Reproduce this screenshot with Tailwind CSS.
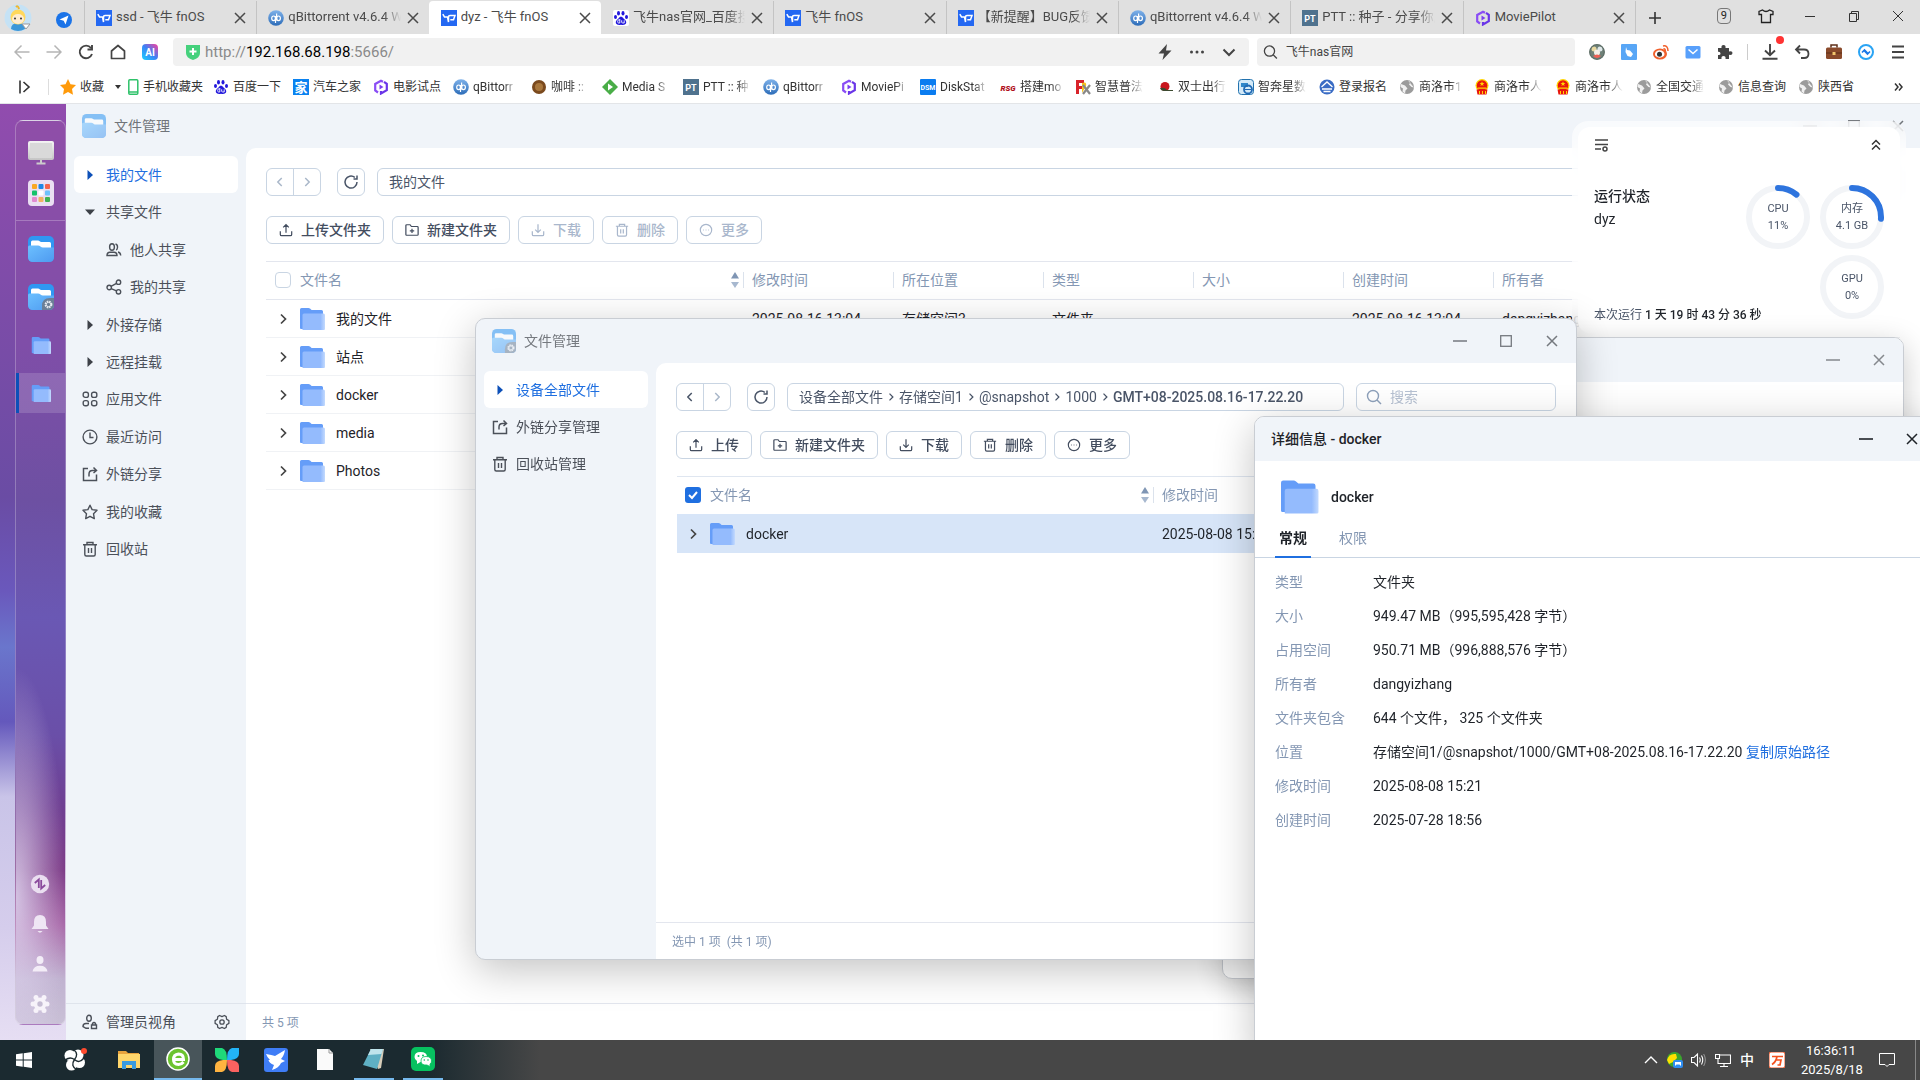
<!DOCTYPE html>
<html lang="zh-CN">
<head>
<meta charset="utf-8">
<meta name="viewport" content="width=device-width, initial-scale=1">
<title>dyz - 飞牛 fnOS</title>
<script src="https://cdn.jsdelivr.net/npm/@tailwindcss/browser@4"></script>
</head>
<body class="flex h-screen flex-col overflow-hidden bg-white font-['Roboto','Noto_Sans_CJK_SC',sans-serif] text-sm text-[#1f2329]">

<svg class="absolute size-0" aria-hidden="true">
  <defs>
    <linearGradient id="g-folder" x1="0" y1="0" x2="1" y2="0"><stop offset=".8" stop-color="#94bbfd"/><stop offset="1" stop-color="#c3dafe"/></linearGradient>
    <linearGradient id="g-app" x1="0" y1="0" x2="1" y2="1"><stop offset="0" stop-color="#6cc0ff"/><stop offset="1" stop-color="#4e9af0"/></linearGradient>
    <linearGradient id="g-mon" x1="0" y1="0" x2="0" y2="1"><stop offset="0" stop-color="#f4f4f4"/><stop offset="1" stop-color="#c4c4c4"/></linearGradient>
    <linearGradient id="g-ai" x1="0" y1="1" x2="1" y2="0"><stop offset="0" stop-color="#19d3ff"/><stop offset=".5" stop-color="#3b82f6"/><stop offset="1" stop-color="#ff3d9a"/></linearGradient>
    <linearGradient id="g-qb" x1="0" y1="0" x2="0" y2="1"><stop offset="0" stop-color="#7fb2ea"/><stop offset="1" stop-color="#2c6cb8"/></linearGradient>
  </defs>
  <symbol id="folder" viewBox="0 0 26 24"><path d="M1 2.500Q1 1 2.500 1H9.500Q10.300 1 11 1.600L12.600 3H22.500Q24 3 24 4.500V22H2Q1 22 1 21Z" fill="#659df8"/><path d="M3.500 8Q3.500 6.500 5 6.500H24.500Q26 6.500 26 8V22Q26 23 25 23H3.500Z" fill="url(#g-folder)"/></symbol>
  <symbol id="app" viewBox="0 0 26 26"><rect width="26" height="26" rx="5" fill="#2f97f2"/><path d="M3 6Q3 4.500 4.500 4.500H10Q11 4.500 12 5.500L13 6H21.500Q23 6 23 7.500V14H3Z" fill="#fff"/><path d="M0 11Q0 9.500 1.500 9.500H10Q11.500 9.500 12.500 10.500Q13.500 11.500 15 11.500H26V21Q26 26 21 26H5Q0 26 0 21Z" fill="url(#g-app)"/></symbol>
  <symbol id="app-gear" viewBox="0 0 26 26"><use href="#app"/><path d="M14 26V22Q14 14 22 14H26V21Q26 26 21 26Z" fill="#6b7f96"/><circle cx="20.500" cy="20.500" r="3" fill="none" stroke="#e4e9f0" stroke-width="1.800" stroke-dasharray="1.600 .8"/><circle cx="20.500" cy="20.500" r="2.200" fill="none" stroke="#e4e9f0"/></symbol>
  <symbol id="upload" viewBox="0 0 16 16"><path d="M8 11V2M4.800 5 8 1.800 11.200 5M1.500 9.500V13Q1.500 14.500 3 14.500H13Q14.500 14.500 14.500 13V9.500" fill="none" stroke="currentColor" stroke-width="1.400"/></symbol>
  <symbol id="download" viewBox="0 0 16 16"><path d="M8 1.500V10.500M4.800 7.500 8 10.700 11.200 7.500M1.500 9.500V13Q1.500 14.500 3 14.500H13Q14.500 14.500 14.500 13V9.500" fill="none" stroke="currentColor" stroke-width="1.400"/></symbol>
  <symbol id="newfolder" viewBox="0 0 16 16"><path d="M1 3Q1 2 2 2H5.800L7.300 4H14Q15 4 15 5V13Q15 14 14 14H2Q1 14 1 13ZM8 6.500V11.500M5.500 9H10.500" fill="none" stroke="currentColor" stroke-width="1.400"/></symbol>
  <symbol id="trash" viewBox="0 0 16 16"><path d="M1 3.700H15M5 3.500V1.500H11V3.500M2.800 4V13.500Q2.800 15 4.300 15H11.700Q13.200 15 13.200 13.500V4M6.500 7V12M9.500 7V12" fill="none" stroke="currentColor" stroke-width="1.400"/></symbol>
  <symbol id="more" viewBox="0 0 16 16"><circle cx="8" cy="8" r="6.500" fill="none" stroke="currentColor" stroke-width="1.300"/><path d="M4.500 8H5.500M7.500 8H8.500M10.500 8H11.500" stroke="currentColor" stroke-width="1"/></symbol>
  <symbol id="refresh" viewBox="0 0 16 16"><path d="M14 8A6 6 0 1 1 11.800 3.400M14 1.500V5H10.500" fill="none" stroke="currentColor" stroke-width="1.500"/></symbol>
  <symbol id="left" viewBox="0 0 16 16"><path d="M10 3.500 5.500 8 10 12.500" fill="none" stroke="currentColor" stroke-width="1.700"/></symbol>
  <symbol id="right" viewBox="0 0 16 16"><path d="M6 3.500 10.500 8 6 12.500" fill="none" stroke="currentColor" stroke-width="1.700"/></symbol>
  <symbol id="share" viewBox="0 0 16 16"><path d="M6 2.500H1.500V14.500H14.500V8.500M7 10.500V8Q7 4.500 10.500 4.500H14.500M11.500 1.500 14.500 4.500 11.500 7" fill="none" stroke="currentColor" stroke-width="1.500"/></symbol>
  <symbol id="clock" viewBox="0 0 16 16"><circle cx="8" cy="8" r="6.900" fill="none" stroke="currentColor" stroke-width="1.400"/><path d="M8 3.500V8.500H11.500" fill="none" stroke="currentColor" stroke-width="1.400"/></symbol>
  <symbol id="star" viewBox="0 0 16 16"><path d="M8 1.200 10.100 5.600 15 6.300 11.500 9.700 12.300 14.600 8 12.300 3.700 14.600 4.500 9.700 1 6.300 5.900 5.600Z" fill="none" stroke="currentColor" stroke-width="1.400" stroke-linejoin="round"/></symbol>
  <symbol id="grid4" viewBox="0 0 16 16"><g fill="none" stroke="currentColor" stroke-width="1.400"><rect x="1.200" y="1.200" width="5.200" height="5.200" rx="2"/><rect x="9.600" y="1.200" width="5.200" height="5.200" rx="2"/><rect x="1.200" y="9.600" width="5.200" height="5.200" rx="2"/><rect x="9.600" y="9.600" width="5.200" height="5.200" rx="2"/></g></symbol>
  <symbol id="people" viewBox="0 0 16 16"><g fill="none" stroke="currentColor" stroke-width="1.400"><ellipse cx="6" cy="5" rx="2.400" ry="3.200"/><path d="M1 13.500Q1 10.200 4 10.200H8Q11 10.200 11 13.500ZM9.500 2Q11.700 2.500 11.500 5.500 11.300 7.500 10.200 8M12 10Q14.500 10.500 14.700 13.500"/></g></symbol>
  <symbol id="nodes" viewBox="0 0 16 16"><g fill="none" stroke="currentColor" stroke-width="1.400"><circle cx="3.200" cy="8.500" r="2.200"/><circle cx="12.500" cy="3.200" r="2.200"/><circle cx="12.500" cy="12.800" r="2.200"/><path d="M5 7.300 10.500 4.300M5.200 9.600 10.500 11.800"/></g></symbol>
  <symbol id="gear" viewBox="0 0 16 16"><path d="M5.600 1.500 8 2.600 10.400 1.500 12.200 2.600 12.600 5.200 14.900 6.600V9.400L12.600 10.800 12.200 13.400 10.400 14.500 8 13.400 5.600 14.500 3.800 13.400 3.400 10.800 1.100 9.400V6.600L3.400 5.200 3.800 2.600Z" fill="none" stroke="currentColor" stroke-width="1.300" stroke-linejoin="round"/><circle cx="8" cy="8" r="2.200" fill="none" stroke="currentColor" stroke-width="1.300"/></symbol>
  <symbol id="admin" viewBox="0 0 16 16"><g fill="none" stroke="currentColor" stroke-width="1.400"><ellipse cx="7" cy="4.300" rx="2.300" ry="3"/><path d="M7 9.500H4Q1 9.500 1 12.500L4 14.300H7M9.500 11H14.500V14.500H9.500ZM10.500 11V9.500Q12 7.500 13.500 9.500V11"/></g></symbol>
  <symbol id="mag" viewBox="0 0 16 16"><circle cx="7" cy="7" r="5.500" fill="none" stroke="currentColor" stroke-width="1.400"/><path d="M11 11 15 15" stroke="currentColor" stroke-width="1.400"/></symbol>
  <symbol id="x" viewBox="0 0 16 16"><path d="M3 3 13 13M13 3 3 13" stroke="currentColor" stroke-width="1.500"/></symbol>
  <symbol id="min" viewBox="0 0 16 16"><path d="M1 8H15" stroke="currentColor" stroke-width="1.600"/></symbol>
  <symbol id="max" viewBox="0 0 16 16"><rect x="2.700" y="2.700" width="10.600" height="10.600" fill="none" stroke="currentColor" stroke-width="1.300"/></symbol>
  <symbol id="sort" viewBox="0 0 8 16"><path d="M4 0 8 6.500H0Z" fill="#7f95b4"/><path d="M4 16 8 10H0Z" fill="#a7b8cf"/></symbol>
  <symbol id="fn" viewBox="0 0 16 16"><rect width="16" height="16" fill="#2468f2"/><path d="M1.800 4.200 3.500 7H6.500L7.500 12V6.700Q7.500 5.500 9 5.500H14L12.500 9.800H9.300" fill="none" stroke="#fff" stroke-width="1.500"/></symbol>
  <symbol id="qb" viewBox="0 0 16 16"><circle cx="8" cy="8" r="7.800" fill="url(#g-qb)"/><g fill="none" stroke="#fff" stroke-width="1.200"><ellipse cx="5.600" cy="8.300" rx="1.900" ry="2.300"/><ellipse cx="10.500" cy="8.300" rx="1.900" ry="2.300"/><path d="M7.500 6V13M8.600 3.500V10.500"/></g></symbol>
  <symbol id="baidu" viewBox="0 0 16 16"><rect width="16" height="16" rx="2" fill="#fff"/><g fill="#2319dc"><ellipse cx="5.500" cy="3.300" rx="1.500" ry="2.200"/><ellipse cx="10" cy="3.300" rx="1.500" ry="2.200"/><ellipse cx="2.500" cy="7" rx="1.500" ry="2"/><ellipse cx="13.500" cy="7" rx="1.500" ry="2"/><path d="M8 6.500Q10 7 11 9 14 11 13 13.500 12 15.500 8 14.800 4 15.500 3 13.500 2 11 5 9 6.500 6.500 8 6.500Z"/></g><path d="M6.800 10H5.500Q4.700 10 4.700 11.500 4.700 13 5.500 13H6.800V9M8.700 10.300V12.500Q9 13 11.200 13V10.300" fill="none" stroke="#fff" stroke-width=".9"/></symbol>
  <symbol id="mp" viewBox="0 0 16 16"><g fill="none" stroke="#8a4df5" stroke-width="2.200"><path d="M5 13.500 2.200 11.500V5L8 1.800 10 2.800"/><path d="M11 2.800 13.800 4.800V11.200L8 14.500V12" stroke="#6a35e8"/></g><path d="M6.500 5.500 10.500 8 6.500 10.500Z" fill="#7b3ff0"/></symbol>
  <symbol id="pt" viewBox="0 0 16 16"><rect width="16" height="16" fill="#4f728e"/><text x="8" y="12" font-size="9" font-weight="700" text-anchor="middle" fill="#fff">PT</text></symbol>
  <symbol id="globe" viewBox="0 0 16 16"><circle cx="8" cy="8" r="7" fill="#9b9b9b"/><path d="M9 1.500 11.500 3 10 5.500 12.500 8 15 8.500 12 5M2 5 6 6.500 8.500 9.500 6.500 11.500 6 14.500 3.500 12.500 4 9.500 1.500 8Z" fill="#fff" opacity=".85"/></symbol>
  <symbol id="emblem" viewBox="0 0 16 16"><circle cx="8" cy="6.500" r="6.500" fill="#ffd400"/><circle cx="8" cy="6.500" r="5.200" fill="#e8160c"/><path d="M2.500 10.500H13.500L12.500 15.500H3.500Z" fill="#e8160c"/><path d="M8 2.200 8.700 4 10.500 4 9 5.200 9.600 7 8 6 6.400 7 7 5.200 5.500 4H7.300ZM4 8.500H12V9.800H4ZM5 12H6V15H5ZM8 12H9V15H8ZM11 12H12V15H11Z" fill="#ffd400"/></symbol>
</svg>

<!-- tab strip -->
<header class="shrink-0">
  <div class="flex h-[34px] items-stretch bg-[#e0e0e0] pt-px text-[13px] text-[#4a4a4a]">
    <div class="flex w-[84px] shrink-0 items-center gap-5 pl-1">
      <svg viewBox="0 0 28 28" class="size-7"><circle cx="14" cy="14" r="13.500" fill="#c5e2f5"/><path d="M7 25Q7 19 14 19T21 25Q14 29 7 25Z" fill="#3c97d8"/><circle cx="14" cy="13" r="7.500" fill="#ffd85c"/><ellipse cx="14" cy="15" rx="6" ry="5" fill="#ffecd0"/><path d="M12 3Q14 1 15 5" stroke="#f0b52c" stroke-width="2" fill="none"/><circle cx="11" cy="14.500" r="1" fill="#333"/><circle cx="17" cy="14.500" r="1" fill="#333"/><path d="M18 20H26L22 25Z" fill="#fff" stroke="#999"/></svg>
      <svg viewBox="0 0 16 16" class="ml-1 mt-1 size-4"><circle cx="8" cy="8" r="8" fill="#1a73e8"/><path d="M12.500 3.500 9.500 12.500 7.700 8.700 3.500 7.500Z" fill="#fff"/></svg>
    </div>
    <a href="#" class="flex min-w-0 flex-1 items-center gap-1 pl-3 pr-2 shadow-[inset_1px_0_0_#c4c4c4]"><svg class="size-4 shrink-0"><use href="#fn"/></svg><span class="flex-1 overflow-hidden whitespace-nowrap">ssd - 飞牛 fnOS</span><svg class="size-4 shrink-0"><use href="#x"/></svg></a>
    <a href="#" class="flex min-w-0 flex-1 items-center gap-1 pl-3 pr-2 shadow-[inset_1px_0_0_#c4c4c4]"><svg class="size-4 shrink-0"><use href="#qb"/></svg><span class="flex-1 overflow-hidden whitespace-nowrap [mask-image:linear-gradient(to_right,#000_85%,transparent)]">qBittorrent v4.6.4 W</span><svg class="size-4 shrink-0"><use href="#x"/></svg></a>
    <a href="#" aria-current="page" class="flex min-w-0 flex-1 items-center gap-1 rounded-t bg-white pl-3 pr-2"><svg class="size-4 shrink-0"><use href="#fn"/></svg><span class="flex-1 overflow-hidden whitespace-nowrap">dyz - 飞牛 fnOS</span><svg class="size-4 shrink-0"><use href="#x"/></svg></a>
    <a href="#" class="flex min-w-0 flex-1 items-center gap-1 pl-3 pr-2"><svg class="size-4 shrink-0"><use href="#baidu"/></svg><span class="flex-1 overflow-hidden whitespace-nowrap [mask-image:linear-gradient(to_right,#000_85%,transparent)]">飞牛nas官网_百度搜</span><svg class="size-4 shrink-0"><use href="#x"/></svg></a>
    <a href="#" class="flex min-w-0 flex-1 items-center gap-1 pl-3 pr-2 shadow-[inset_1px_0_0_#c4c4c4]"><svg class="size-4 shrink-0"><use href="#fn"/></svg><span class="flex-1 overflow-hidden whitespace-nowrap">飞牛 fnOS</span><svg class="size-4 shrink-0"><use href="#x"/></svg></a>
    <a href="#" class="flex min-w-0 flex-1 items-center gap-1 pl-3 pr-2 shadow-[inset_1px_0_0_#c4c4c4]"><svg class="size-4 shrink-0"><use href="#fn"/></svg><span class="flex-1 overflow-hidden whitespace-nowrap [mask-image:linear-gradient(to_right,#000_85%,transparent)]">【新提醒】BUG反馈</span><svg class="size-4 shrink-0"><use href="#x"/></svg></a>
    <a href="#" class="flex min-w-0 flex-1 items-center gap-1 pl-3 pr-2 shadow-[inset_1px_0_0_#c4c4c4]"><svg class="size-4 shrink-0"><use href="#qb"/></svg><span class="flex-1 overflow-hidden whitespace-nowrap [mask-image:linear-gradient(to_right,#000_85%,transparent)]">qBittorrent v4.6.4 W</span><svg class="size-4 shrink-0"><use href="#x"/></svg></a>
    <a href="#" class="flex min-w-0 flex-1 items-center gap-1 pl-3 pr-2 shadow-[inset_1px_0_0_#c4c4c4]"><svg class="size-4 shrink-0"><use href="#pt"/></svg><span class="flex-1 overflow-hidden whitespace-nowrap [mask-image:linear-gradient(to_right,#000_85%,transparent)]">PTT :: 种子 - 分享你所</span><svg class="size-4 shrink-0"><use href="#x"/></svg></a>
    <a href="#" class="flex min-w-0 flex-1 items-center gap-1 pl-3 pr-2 shadow-[inset_1px_0_0_#c4c4c4]"><svg class="size-4 shrink-0"><use href="#mp"/></svg><span class="flex-1 overflow-hidden whitespace-nowrap">MoviePilot</span><svg class="size-4 shrink-0"><use href="#x"/></svg></a>
    <div class="flex w-[285px] shrink-0 items-center pl-3 text-[#222] shadow-[inset_1px_0_0_#c4c4c4]">
      <button aria-label="新标签页"><svg viewBox="0 0 16 16" class="size-4"><path d="M8 2V14M2 8H14" stroke="#333" stroke-width="1.600"/></svg></button>
      <div class="ml-auto flex items-center pb-1 pr-3.5">
        <button class="mr-[27px] h-4 w-[14px] rounded-sm border border-[#777] text-[11px] leading-[14px]">9</button>
        <button aria-label="皮肤" class="mr-7"><svg viewBox="0 0 16 16" class="size-4"><path d="M4.500 2Q8 5 11.500 2L15 3.500V6.500H12.500V14.500H3.500V6.500H1V3.500Z" fill="none" stroke="#222" stroke-width="1.300"/></svg></button>
        <button aria-label="最小化" class="mr-7"><svg viewBox="0 0 16 16" class="size-4"><path d="M3 8.500H13" stroke="#333"/></svg></button>
        <button aria-label="还原" class="mr-7"><svg viewBox="0 0 16 16" class="size-4"><path d="M3.500 5.500H10.500V13.500H3.500ZM5.500 5.500V3.500H12.500V11.500H10.500" fill="none" stroke="#333"/></svg></button>
        <button aria-label="关闭"><svg viewBox="0 0 16 16" class="size-4"><path d="M3 3 13 13M13 3 3 13" stroke="#333"/></svg></button>
      </div>
    </div>
  </div>

  <!-- address row -->
  <div class="flex h-9 items-center">
    <div class="flex w-[173px] shrink-0 items-center gap-4 pl-[14px] text-[#444]">
      <button aria-label="后退"><svg viewBox="0 0 16 16" class="size-4"><path d="M15.500 8H1.500M7.500 1.500 1 8 7.500 14.500" fill="none" stroke="#b5b5b5" stroke-width="1.500"/></svg></button>
      <button aria-label="前进"><svg viewBox="0 0 16 16" class="size-4"><path d="M.5 8H14.500M8.500 1.500 15 8 8.500 14.500" fill="none" stroke="#b5b5b5" stroke-width="1.500"/></svg></button>
      <button aria-label="刷新"><svg viewBox="0 0 16 16" class="size-4"><path d="M14 10A6.300 6.300 0 1 1 13 4M14 1V5.500H9.500" fill="none" stroke="#444" stroke-width="1.900"/></svg></button>
      <button aria-label="主页"><svg viewBox="0 0 16 16" class="size-4"><path d="M1.500 14.500V7L8 1.500 14.500 7V14.500Z" fill="none" stroke="#444" stroke-width="1.700" stroke-linejoin="round"/></svg></button>
      <button aria-label="AI"><svg viewBox="0 0 16 16" class="size-4"><rect width="16" height="16" rx="4" fill="url(#g-ai)"/><text x="8" y="12" font-size="10" font-weight="700" text-anchor="middle" fill="#fff">AI</text></svg></button>
    </div>
    <div class="flex h-[34px] min-w-0 flex-1 items-center gap-4">
      <div class="flex h-7 min-w-0 flex-1 items-center gap-4 rounded bg-[#f1f1f1] px-3">
        <svg viewBox="0 0 16 16" class="-mr-3 size-4"><path d="M1 1H15V9Q15 14 8 16 1 14 1 9Z" fill="#45d17c"/><path d="M8 4V11M4.500 7.500H11.500" stroke="#fff" stroke-width="2"/></svg>
        <div role="textbox" aria-label="地址栏" class="flex-1 pt-px text-[15px] text-[#8a8a8a]">http://<span class="text-black">192.168.68.198</span>:5666/</div>
        <svg viewBox="0 0 16 16" class="size-4"><path d="M10 0 1.500 9.500H7L5.500 16 14.500 6.500H9Z" fill="#444"/></svg>
        <svg viewBox="0 0 16 16" class="size-4"><g fill="#444"><circle cx="2.500" cy="8" r="1.500"/><circle cx="8" cy="8" r="1.500"/><circle cx="13.500" cy="8" r="1.500"/></g></svg>
        <svg viewBox="0 0 16 16" class="size-4"><path d="M2.500 5.500 8 11 13.500 5.500" fill="none" stroke="#444" stroke-width="2"/></svg>
      </div>
    </div>
    <label class="ml-2 flex h-7 w-[318px] shrink-0 items-center gap-2 rounded bg-[#f1f1f1] pl-1.5">
      <svg class="size-4 text-[#444]"><use href="#mag"/></svg>
      <input aria-label="搜索" value="飞牛nas官网" class="w-full bg-transparent text-xs text-[#444] outline-none">
    </label>
    <div class="flex w-[345px] shrink-0 items-center gap-4 pl-[14px]">
      <svg viewBox="0 0 16 16" class="size-4"><circle cx="8" cy="8" r="7.500" fill="#6f8178"/><circle cx="5" cy="5" r="2.500" fill="#e8d9a0"/><circle cx="11" cy="5" r="2.500" fill="#dfe8ea"/><circle cx="8" cy="8.500" r="3" fill="#f4efe8"/><path d="M4 12Q8 9 12 12 8 16 4 12Z" fill="#ee5f55"/><circle cx="8" cy="8" r="7.300" fill="none" stroke="#5f6f68" stroke-width="1.300"/></svg>
      <svg viewBox="0 0 16 16" class="size-4"><rect width="16" height="16" rx="1" fill="#58a6f6"/><path d="M5 3 6 6 9 6.500 12 10 10 13 6.500 12 4.500 8Z" fill="#fff"/></svg>
      <svg viewBox="0 0 16 16" class="size-4"><ellipse cx="7" cy="10" rx="7" ry="5.500" fill="#f1602c"/><ellipse cx="6.700" cy="10" rx="4.800" ry="3.700" fill="#fff"/><circle cx="6.500" cy="10.200" r="2.500" fill="#333"/><path d="M10 2Q15 1 15 7M10.500 4.800Q12.500 4.500 12.300 7" stroke="#f1602c" stroke-width="1.500" fill="none"/></svg>
      <svg viewBox="0 0 16 16" class="size-4"><rect x=".5" y="2" width="15" height="12.500" rx="1.500" fill="#58a0fb"/><path d="M3.500 5.500 8 9.500 12.500 5.500" fill="none" stroke="#fff" stroke-width="1.500"/></svg>
      <svg viewBox="0 0 16 16" class="size-4"><path d="M1 4H4.500Q4 1 6.500 1T8.500 4H12V7.500Q15.500 6.500 15.500 9T12 10.800V15H8.500Q9 12 6.500 12T4.500 15H1V11Q3.500 11.500 3.500 9.500T1 7.800Z" fill="#444"/></svg>
      <span class="-mx-0.5 h-4 w-px bg-[#ccc]"></span>
      <span class="relative"><svg viewBox="0 0 16 16" class="size-4"><path d="M8 0V11M3 6.500 8 11.300 13 6.500M.5 14.800H15.500" fill="none" stroke="#444" stroke-width="1.900"/></svg><i class="absolute -right-1.5 -top-2 size-2 rounded-full bg-[#f33]"></i></span>
      <svg viewBox="0 0 16 16" class="size-4"><path d="M6 1.500 2 5.500 6 9.500M2 5.500H10Q14.500 5.500 14.500 9.800T10 14H7" fill="none" stroke="#444" stroke-width="1.800"/></svg>
      <svg viewBox="0 0 16 16" class="size-4"><rect y="3.500" width="16" height="11.500" rx="1.500" fill="#8a4a2b"/><path d="M5 3.500V1H11V3.500" fill="none" stroke="#5d2f18" stroke-width="1.500"/><path d="M0 9H16" stroke="#5d2f18"/><rect x="6.500" y="8" width="3" height="3" fill="#f3c56d"/></svg>
      <svg viewBox="0 0 16 16" class="size-4"><circle cx="8" cy="8" r="7" fill="none" stroke="#2aa4f4" stroke-width="2"/><path d="M4 8.500 6.500 6 9.500 9M12 7.500 9.500 10 6.500 7" fill="none" stroke="#1a78e8" stroke-width="1.600"/></svg>
      <button aria-label="菜单"><svg viewBox="0 0 16 16" class="size-4"><path d="M2 2.500H14M2 8H14M2 13.500H14" stroke="#444" stroke-width="1.800"/></svg></button>
    </div>
  </div>

  <!-- bookmarks -->
  <nav class="flex h-[34px] items-center overflow-hidden border-b border-[#e3e5e8] text-xs whitespace-nowrap text-[#333]">
    <div class="flex w-[127px] shrink-0 items-center pl-4">
      <svg viewBox="0 0 16 16" class="size-4"><path d="M4 1.500V14.500M7.500 3 13 8 7.500 13" fill="none" stroke="#333" stroke-width="1.600"/></svg>
      <span class="ml-4 h-4 w-px bg-[#ddd]"></span>
      <svg viewBox="0 0 16 16" class="ml-[11px] size-4"><path d="M8 0 10.500 5.200 16 6 12 10 13 15.800 8 13 3 15.800 4 10 0 6 5.500 5.200Z" fill="#ff9a0a"/></svg>
      <span class="ml-1 flex-1">收藏</span><svg viewBox="0 0 8 8" class="mr-[5px] size-2"><path d="M1 2H7L4 6Z" fill="#333"/></svg>
    </div>
    <a href="#" class="flex w-[86px] shrink-0 items-center gap-1"><svg viewBox="0 0 12 16" class="h-4 w-3"><rect x="1.800" y=".8" width="9" height="14.400" rx="1" fill="#fff" stroke="#2fc26a" stroke-width="1.500"/><path d="M2 13H11" stroke="#2fc26a" stroke-width="1.500"/></svg>手机收藏夹</a>
    <a href="#" class="flex w-20 shrink-0 items-center gap-1"><svg class="size-4 shrink-0"><use href="#baidu"/></svg>百度一下</a>
    <a href="#" class="flex w-20 shrink-0 items-center gap-1"><svg viewBox="0 0 16 16" class="size-4 shrink-0"><rect width="16" height="16" fill="#0a82f0"/><text x="8" y="13" font-size="13" font-weight="700" text-anchor="middle" fill="#fff">家</text></svg>汽车之家</a>
    <a href="#" class="flex w-20 shrink-0 items-center gap-1"><svg class="size-4 shrink-0"><use href="#mp"/></svg>电影试点</a>
    <a href="#" class="flex w-[78px] shrink-0 items-center gap-1"><svg class="size-4 shrink-0"><use href="#qb"/></svg><span class="w-11 overflow-hidden [mask-image:linear-gradient(to_right,#000_70%,transparent)]">qBittorr</span></a>
    <a href="#" class="flex w-[71px] shrink-0 items-center gap-1"><svg viewBox="0 0 16 16" class="size-4 shrink-0"><circle cx="8" cy="8" r="7" fill="#7b4a1e"/><circle cx="8" cy="8" r="4" fill="#a9773c"/></svg><span class="w-9 overflow-hidden [mask-image:linear-gradient(to_right,#000_70%,transparent)]">咖啡 ::</span></a>
    <a href="#" class="flex w-[81px] shrink-0 items-center gap-1"><svg viewBox="0 0 16 16" class="size-4 shrink-0"><path d="M8 0 16 8 8 16 0 8Z" fill="#49ad47"/><path d="M6 4.500 11 8 6 11.500Z" fill="#fff"/></svg><span class="w-12 overflow-hidden [mask-image:linear-gradient(to_right,#000_70%,transparent)]">Media S</span></a>
    <a href="#" class="flex w-20 shrink-0 items-center gap-1"><svg class="size-4 shrink-0"><use href="#pt"/></svg><span class="w-12 overflow-hidden [mask-image:linear-gradient(to_right,#000_70%,transparent)]">PTT :: 种</span></a>
    <a href="#" class="flex w-[78px] shrink-0 items-center gap-1"><svg class="size-4 shrink-0"><use href="#qb"/></svg><span class="w-11 overflow-hidden [mask-image:linear-gradient(to_right,#000_70%,transparent)]">qBittorr</span></a>
    <a href="#" class="flex w-[79px] shrink-0 items-center gap-1"><svg class="size-4 shrink-0"><use href="#mp"/></svg><span class="w-12 overflow-hidden [mask-image:linear-gradient(to_right,#000_70%,transparent)]">MoviePi</span></a>
    <a href="#" class="flex w-20 shrink-0 items-center gap-1"><svg viewBox="0 0 16 16" class="size-4 shrink-0"><rect width="16" height="16" rx="1" fill="#0a7cf0"/><text x="8" y="11" font-size="7" font-weight="700" text-anchor="middle" fill="#fff">DSM</text></svg><span class="w-12 overflow-hidden [mask-image:linear-gradient(to_right,#000_70%,transparent)]">DiskStat</span></a>
    <a href="#" class="flex w-[75px] shrink-0 items-center gap-1"><svg viewBox="0 0 16 16" class="size-4 shrink-0"><text x="8" y="11.500" font-size="8" font-weight="900" font-style="italic" text-anchor="middle" fill="#b01020">RSG</text></svg><span class="w-11 overflow-hidden [mask-image:linear-gradient(to_right,#000_70%,transparent)]">搭建mo</span></a>
    <a href="#" class="flex w-[83px] shrink-0 items-center gap-1"><svg viewBox="0 0 16 16" class="size-4 shrink-0"><path d="M1 15V1H9V4H4V7H8V10H4V15Z" fill="#d8232a"/><path d="M7 4Q12 2 11 7L7 14Z" fill="#f6c21c"/><path d="M8 6 15 15M15 6 8 15" stroke="#888" stroke-width="2.200"/></svg><span class="w-12 overflow-hidden [mask-image:linear-gradient(to_right,#000_70%,transparent)]">智慧普法</span></a>
    <a href="#" class="flex w-20 shrink-0 items-center gap-1"><svg viewBox="0 0 16 16" class="size-4 shrink-0"><circle cx="7" cy="7.500" r="4.500" fill="#c8161d"/><path d="M2 9Q7 8 9 11H15V12H6Q3 12 2 9Z" fill="#3c4a30"/></svg><span class="w-12 overflow-hidden [mask-image:linear-gradient(to_right,#000_70%,transparent)]">双士出行</span></a>
    <a href="#" class="flex w-[81px] shrink-0 items-center gap-1"><svg viewBox="0 0 16 16" class="size-4 shrink-0"><rect x=".5" y=".5" width="15" height="15" rx="3" fill="#d3e9f8" stroke="#2272ae"/><path d="M3 4H10V8H3Z" fill="#2f86c9"/><circle cx="10" cy="10.500" r="4" fill="none" stroke="#2069b4" stroke-width="1.800"/><path d="M7 10.500H13" stroke="#2069b4"/></svg><span class="w-12 overflow-hidden [mask-image:linear-gradient(to_right,#000_70%,transparent)]">智奔星数</span></a>
    <a href="#" class="flex w-20 shrink-0 items-center gap-1"><svg viewBox="0 0 16 16" class="size-4 shrink-0"><circle cx="8" cy="8" r="7.500" fill="#3a6cc4"/><path d="M2.500 8 8 3 13.500 8M3 10H13M4.500 12.500H11.500" stroke="#fff" stroke-width="1.300" fill="none"/></svg>登录报名</a>
    <a href="#" class="flex w-[75px] shrink-0 items-center gap-1"><svg class="size-4 shrink-0"><use href="#globe"/></svg><span class="w-11 overflow-hidden [mask-image:linear-gradient(to_right,#000_70%,transparent)]">商洛市1</span></a>
    <a href="#" class="flex w-[81px] shrink-0 items-center gap-1"><svg class="size-4 shrink-0"><use href="#emblem"/></svg><span class="w-12 overflow-hidden [mask-image:linear-gradient(to_right,#000_70%,transparent)]">商洛市人</span></a>
    <a href="#" class="flex w-[81px] shrink-0 items-center gap-1"><svg class="size-4 shrink-0"><use href="#emblem"/></svg><span class="w-12 overflow-hidden [mask-image:linear-gradient(to_right,#000_70%,transparent)]">商洛市人</span></a>
    <a href="#" class="flex w-[82px] shrink-0 items-center gap-1"><svg class="size-4 shrink-0"><use href="#globe"/></svg><span class="w-12 overflow-hidden [mask-image:linear-gradient(to_right,#000_70%,transparent)]">全国交通</span></a>
    <a href="#" class="flex w-20 shrink-0 items-center gap-1"><svg class="size-4 shrink-0"><use href="#globe"/></svg>信息查询</a>
    <a href="#" class="flex shrink-0 items-center gap-1"><svg class="size-4 shrink-0"><use href="#globe"/></svg>陕西省</a>
    <button aria-label="更多书签" class="ml-auto mr-3.5"><svg viewBox="0 0 16 16" class="size-4"><path d="M5 4.500 8 8 5 11.500M9 4.500 12 8 9 11.500" fill="none" stroke="#333" stroke-width="1.500"/></svg></button>
  </nav>
</header>

<!-- desktop -->
<main class="relative flex min-h-0 flex-1 overflow-hidden bg-[linear-gradient(180deg,#914cae_0%,#7c4ca8_22%,#6a4ca4_42%,#6a58bc_52%,#6a76cc_58%,#6458bc_66%,#c9c4e8_74%,#d5cdec_88%,#e6def3_100%)]">
  <nav aria-label="程序坞" class="mb-[15px] ml-[15px] mt-4 flex w-[51px] shrink-0 flex-col items-center rounded-lg border border-white/25 bg-[radial-gradient(ellipse_50px_230px_at_0%_86%,rgba(222,212,238,0.85),transparent),linear-gradient(180deg,#8f4ea8_0%,#7f4ea8_25%,#6d50a2_42%,#6a58b4_55%,#6a4fa8_68%,#6f3f92_76%,#7c3a86_83%,#a868a8_89%,#c0b2d0_95%,#c9c0d6_100%)]">
    <button aria-label="桌面" class="mt-3 flex h-10 items-center"><svg viewBox="0 0 26 26" class="size-[26px]"><rect y="1" width="26" height="19" rx="2" fill="url(#g-mon)"/><rect x="2" y="3" width="22" height="15" fill="#d9d9d9"/><path d="M12 20H14V22.500H17.500V24.500H8.500V22.500H12Z" fill="#ccc"/></svg></button>
    <button aria-label="应用" class="flex h-10 items-center"><svg viewBox="0 0 26 26" class="size-[26px]"><rect width="26" height="26" rx="4" fill="#eadff2"/><g><rect x="4" y="4" width="5" height="5" rx="1" fill="#f9a825"/><rect x="10.500" y="4" width="5" height="5" rx="1" fill="#1e88e5"/><rect x="17" y="4" width="5" height="5" rx="1" fill="#f4644d"/><rect x="4" y="10.500" width="5" height="5" rx="1" fill="#12c26b"/><rect x="10.500" y="10.500" width="5" height="5" rx="1" fill="#fff"/><rect x="17" y="10.500" width="5" height="5" rx="1" fill="#6fc2fb"/><rect x="4" y="17" width="5" height="5" rx="1" fill="#e08ad0"/><rect x="10.500" y="17" width="5" height="5" rx="1" fill="#f2b263"/><rect x="17" y="17" width="5" height="5" rx="1" fill="#3fb250"/></g></svg></button>
    <div class="mb-1 mt-[7px] h-px w-full bg-white/25"></div>
    <button aria-label="文件管理" class="flex h-12 items-center"><svg class="size-[26px]"><use href="#app"/></svg></button>
    <button aria-label="设备文件管理" class="flex h-12 items-center"><svg class="size-[26px]"><use href="#app-gear"/></svg></button>
    <button aria-label="文件夹" class="flex h-12 items-center"><svg class="h-[19px] w-5"><use href="#folder"/></svg></button>
    <button aria-label="当前文件夹" class="my-1 flex h-10 w-full items-center justify-center border-l-3 border-[#0d50b8] bg-white/15 pr-0.5"><svg class="h-[19px] w-5"><use href="#folder"/></svg></button>
    <div class="mt-auto flex flex-col items-center pr-0.5">
      <button aria-label="传输" class="flex h-10 items-center"><svg viewBox="0 0 20 20" class="size-5"><circle cx="10" cy="10" r="9.200" fill="#eadff0"/><path d="M4.800 9 8.800 5.500V14M11.200 6V14.500L15.200 11" stroke="#8a4a9c" stroke-width="1.800" fill="none"/></svg></button>
      <button aria-label="通知" class="flex h-10 items-center"><svg viewBox="0 0 20 20" class="size-5"><path d="M10 1Q16 1 16 8V11.500L18.500 15H1.500L4 11.500V8Q4 1 10 1ZM7.500 17H12.500Q10 20.500 7.500 17Z" fill="#efe6f4"/></svg></button>
      <button aria-label="用户" class="flex h-10 items-center"><svg viewBox="0 0 20 20" class="size-5"><ellipse cx="10" cy="6" rx="3.500" ry="4" fill="#f3edf7"/><path d="M2.500 17.500Q3.500 11.800 10 11.800T17.500 17.500Z" fill="#f3edf7"/></svg></button>
      <button aria-label="设置" class="flex h-10 items-center"><svg viewBox="0 0 20 20" class="size-5"><g fill="#f7f3fa"><circle cx="10" cy="10" r="6.500"/><circle cx="6" cy="3.500" r="2.500"/><circle cx="14" cy="3.500" r="2.500"/><circle cx="3" cy="10" r="2.500"/><circle cx="17" cy="10" r="2.500"/><circle cx="6" cy="16.500" r="2.500"/><circle cx="14" cy="16.500" r="2.500"/></g><circle cx="10" cy="10" r="2.700" fill="#c5bcd3"/></svg></button>
    </div>
  </nav>

  <!-- main file window -->
  <section class="flex min-w-0 flex-1 flex-col bg-[#f0f4f9]">
    <div class="flex h-11 shrink-0 items-center gap-2 pl-4 pr-3.5 text-[#70747a]">
      <svg class="size-6 opacity-55"><use href="#app"/></svg><h2 class="flex-1">文件管理</h2>
      <button aria-label="最小化" class="mr-5"><svg class="size-4"><use href="#min"/></svg></button>
      <button aria-label="最大化" class="mr-5"><svg class="size-4"><use href="#max"/></svg></button>
      <button aria-label="关闭"><svg class="size-4"><use href="#x"/></svg></button>
    </div>
    <div class="flex min-h-0 flex-1">
      <aside class="flex w-[180px] shrink-0 flex-col text-[#4b5059]">
        <ul class="mx-2 mt-2 grid h-[412px] auto-rows-fr">
          <li><a href="#" class="flex h-full items-center gap-2 rounded-md bg-white pl-2 text-[#1f6fe0]"><svg viewBox="0 0 16 16" class="size-4"><path d="M5.500 3 11 8 5.500 13Z" fill="#0d50b8"/></svg>我的文件</a></li>
          <li><a href="#" class="flex h-full items-center gap-2 pl-2"><svg viewBox="0 0 16 16" class="size-4"><path d="M3 5.500H13L8 11Z" fill="#3d4148"/></svg>共享文件</a></li>
          <li><a href="#" class="flex h-full items-center gap-2 pl-8"><svg class="size-4"><use href="#people"/></svg>他人共享</a></li>
          <li><a href="#" class="flex h-full items-center gap-2 pl-8"><svg class="size-4"><use href="#nodes"/></svg>我的共享</a></li>
          <li><a href="#" class="flex h-full items-center gap-2 pl-2"><svg viewBox="0 0 16 16" class="size-4"><path d="M5.500 3 11 8 5.500 13Z" fill="#3d4148"/></svg>外接存储</a></li>
          <li><a href="#" class="flex h-full items-center gap-2 pl-2"><svg viewBox="0 0 16 16" class="size-4"><path d="M5.500 3 11 8 5.500 13Z" fill="#3d4148"/></svg>远程挂载</a></li>
          <li><a href="#" class="flex h-full items-center gap-2 pl-2"><svg class="size-4"><use href="#grid4"/></svg>应用文件</a></li>
          <li><a href="#" class="flex h-full items-center gap-2 pl-2"><svg class="size-4"><use href="#clock"/></svg>最近访问</a></li>
          <li><a href="#" class="flex h-full items-center gap-2 pl-2"><svg class="size-4"><use href="#share"/></svg>外链分享</a></li>
          <li><a href="#" class="flex h-full items-center gap-2 pl-2"><svg class="size-4"><use href="#star"/></svg>我的收藏</a></li>
          <li><a href="#" class="flex h-full items-center gap-2 pl-2"><svg class="size-4"><use href="#trash"/></svg>回收站</a></li>
        </ul>
        <div class="mt-auto flex h-[37px] items-center gap-2 border-t border-[#dfe4ec] pl-4 pr-4"><svg class="size-4"><use href="#admin"/></svg><span class="flex-1">管理员视角</span><button aria-label="设置" class="flex"><svg class="size-4"><use href="#gear"/></svg></button></div>
      </aside>
      <div class="flex min-w-0 flex-1 flex-col rounded-tl-[10px] bg-white pt-5">
        <div class="flex h-7 px-5 text-[#4a5568]">
          <div class="flex w-[55px] rounded-md border border-[#c9d5e3] text-[#a9b7c9]"><button aria-label="后退" class="flex flex-1 items-center justify-center border-r border-[#c9d5e3]"><svg class="size-3.5"><use href="#left"/></svg></button><button aria-label="前进" class="flex flex-1 items-center justify-center"><svg class="size-3.5"><use href="#right"/></svg></button></div>
          <button aria-label="刷新" class="ml-4 flex w-7 items-center justify-center rounded-md border border-[#c9d5e3]"><svg class="size-4"><use href="#refresh"/></svg></button>
          <input aria-label="路径" value="我的文件" class="ml-3 min-w-0 flex-1 rounded-md border border-[#c9d5e3] px-[11px]">
        </div>
        <div class="mt-5 flex h-7 gap-2 px-5 font-medium text-[#434d5f]">
          <button class="flex items-center gap-2 rounded-md border border-[#c9d5e3] px-3"><svg class="size-3.5"><use href="#upload"/></svg>上传文件夹</button>
          <button class="flex items-center gap-2 rounded-md border border-[#c9d5e3] px-3"><svg class="size-3.5"><use href="#newfolder"/></svg>新建文件夹</button>
          <button disabled class="flex items-center gap-2 rounded-md border border-[#c9d5e3] px-3 text-[#a9b7cc]"><svg class="size-3.5"><use href="#download"/></svg>下载</button>
          <button disabled class="flex items-center gap-2 rounded-md border border-[#c9d5e3] px-3 text-[#a9b7cc]"><svg class="size-3.5"><use href="#trash"/></svg>删除</button>
          <button disabled class="flex items-center gap-2 rounded-md border border-[#c9d5e3] px-3 text-[#a9b7cc]"><svg class="size-3.5"><use href="#more"/></svg>更多</button>
        </div>
        <div class="mt-[17px] px-5">
          <table class="w-full table-fixed border-separate border-spacing-0 text-left whitespace-nowrap">
            <colgroup><col class="w-[477px]"><col class="w-[150px]"><col class="w-[150px]"><col class="w-[150px]"><col class="w-[150px]"><col class="w-[150px]"><col></colgroup>
            <thead class="text-[#8497b3] [&_th]:pb-0.5">
              <tr class="h-[39px]">
                <th class="border-y border-[#e3e6ee] p-0 font-normal"><div class="flex items-center pl-[9px] pr-1"><input type="checkbox" aria-label="全选" class="mr-[9px] size-4 appearance-none rounded-sm border border-[#c9d5e3]"><span class="flex-1">文件名</span><svg class="h-4 w-2"><use href="#sort"/></svg></div></th>
                <th class="border-y border-[#e3e6ee] p-0 font-normal"><div class="h-4 border-l border-[#dbe2ec] pl-2 leading-4">修改时间</div></th>
                <th class="border-y border-[#e3e6ee] p-0 font-normal"><div class="h-4 border-l border-[#dbe2ec] pl-2 leading-4">所在位置</div></th>
                <th class="border-y border-[#e3e6ee] p-0 font-normal"><div class="h-4 border-l border-[#dbe2ec] pl-2 leading-4">类型</div></th>
                <th class="border-y border-[#e3e6ee] p-0 font-normal"><div class="h-4 border-l border-[#dbe2ec] pl-2 leading-4">大小</div></th>
                <th class="border-y border-[#e3e6ee] p-0 font-normal"><div class="h-4 border-l border-[#dbe2ec] pl-2 leading-4">创建时间</div></th>
                <th class="border-y border-[#e3e6ee] p-0 font-normal"><div class="h-4 border-l border-[#dbe2ec] pl-2 leading-4">所有者</div></th>
              </tr>
            </thead>
            <tbody>
              <tr class="h-[38px]"><td class="border-b border-[#f0f2f5] p-0"><div class="flex items-center pl-[9px]"><svg class="size-4 text-[#444]"><use href="#right"/></svg><svg class="ml-2 mr-[11px] h-6 w-[26px]"><use href="#folder"/></svg>我的文件</div></td><td class="border-b border-[#f0f2f5] p-0 pl-[9px]">2025-08-16 13:04</td><td class="border-b border-[#f0f2f5] p-0 pl-[9px]">存储空间3</td><td class="border-b border-[#f0f2f5] p-0 pl-[9px]">文件夹</td><td class="border-b border-[#f0f2f5] p-0"></td><td class="border-b border-[#f0f2f5] p-0 pl-[9px]">2025-08-16 13:04</td><td class="border-b border-[#f0f2f5] p-0 pl-[9px]">dangyizhang</td></tr>
              <tr class="h-[38px]"><td colspan="7" class="border-b border-[#f0f2f5] p-0"><div class="flex items-center pl-[9px]"><svg class="size-4 text-[#444]"><use href="#right"/></svg><svg class="ml-2 mr-[11px] h-6 w-[26px]"><use href="#folder"/></svg>站点</div></td></tr>
              <tr class="h-[38px]"><td colspan="7" class="border-b border-[#f0f2f5] p-0"><div class="flex items-center pl-[9px]"><svg class="size-4 text-[#444]"><use href="#right"/></svg><svg class="ml-2 mr-[11px] h-6 w-[26px]"><use href="#folder"/></svg>docker</div></td></tr>
              <tr class="h-[38px]"><td colspan="7" class="border-b border-[#f0f2f5] p-0"><div class="flex items-center pl-[9px]"><svg class="size-4 text-[#444]"><use href="#right"/></svg><svg class="ml-2 mr-[11px] h-6 w-[26px]"><use href="#folder"/></svg>media</div></td></tr>
              <tr class="h-[38px]"><td colspan="7" class="border-b border-[#f0f2f5] p-0"><div class="flex items-center pl-[9px]"><svg class="size-4 text-[#444]"><use href="#right"/></svg><svg class="ml-2 mr-[11px] h-6 w-[26px]"><use href="#folder"/></svg>Photos</div></td></tr>
            </tbody>
          </table>
        </div>
        <div class="mt-auto flex h-[37px] items-center border-t border-[#e3e6ee] pl-4 pt-px text-xs text-[#8497b3]">共 5 项</div>
      </div>
    </div>
  </section>

  <!-- status widget -->
  <aside class="absolute right-[14px] top-[17px] h-[218px] w-[334px] rounded-2xl bg-white/60 p-1.5 backdrop-blur-sm">
    <div class="flex h-full flex-col rounded-xl bg-white pl-4 pr-4">
      <div class="flex h-9 items-center justify-between">
        <button aria-label="小组件设置" class="flex"><svg viewBox="0 0 16 16" class="size-4"><path d="M1 3H14M1 7.500H14M1 12H7" stroke="#444" stroke-width="1.600"/><circle cx="11" cy="12" r="2" fill="none" stroke="#444" stroke-width="1.500"/></svg></button>
        <button aria-label="收起" class="flex"><svg viewBox="0 0 16 16" class="size-4"><path d="M4 7.500 8 3.500 12 7.500M4 12.500 8 8.500 12 12.500" fill="none" stroke="#333" stroke-width="1.500"/></svg></button>
      </div>
      <div class="flex flex-1 justify-between pt-[22px]">
        <div class="flex flex-col">
          <h3 class="leading-[23px] font-medium">运行状态</h3>
          <p class="leading-[23px]">dyz</p>
          <p class="mt-auto mb-2 w-0 text-xs leading-5 whitespace-nowrap text-[#4a5568]">本次运行 <span class="font-medium text-[#1f2329]">1 天 19 时 43 分 36 秒</span></p>
        </div>
        <div class="grid shrink-0 grid-cols-2 content-start gap-x-2.5 gap-y-1.5 text-center text-[11px] leading-[17px] text-[#4a5568]">
          <div class="relative flex size-16 flex-col justify-center"><svg viewBox="0 0 64 64" class="absolute inset-0 -rotate-90"><circle cx="32" cy="32" r="29" fill="none" stroke="#f2f4f7" stroke-width="6"/><circle cx="32" cy="32" r="29" fill="none" stroke="#2e74de" stroke-width="6" stroke-linecap="round" pathLength="100" stroke-dasharray="11 100"/></svg><span>CPU</span><span>11%</span></div>
          <div class="relative flex size-16 flex-col justify-center"><svg viewBox="0 0 64 64" class="absolute inset-0 -rotate-90"><circle cx="32" cy="32" r="29" fill="none" stroke="#f2f4f7" stroke-width="6"/><circle cx="32" cy="32" r="29" fill="none" stroke="#2e74de" stroke-width="6" stroke-linecap="round" pathLength="100" stroke-dasharray="26 100"/></svg><span>内存</span><span>4.1 GB</span></div>
          <div class="relative col-start-2 flex size-16 flex-col justify-center"><svg viewBox="0 0 64 64" class="absolute inset-0"><circle cx="32" cy="32" r="29" fill="none" stroke="#f2f4f7" stroke-width="6"/></svg><span>GPU</span><span>0%</span></div>
        </div>
      </div>
    </div>
  </aside>

  <!-- second details window, behind the others -->
  <section class="absolute right-4 top-[233px] h-[642px] w-[682px] overflow-hidden rounded-[10px] border border-[#c9cdd3] bg-white shadow-[0_8px_30px_rgba(0,0,0,0.22)]">
    <div class="flex h-11 items-center justify-end gap-[30px] bg-[#f0f4f9] pr-4 text-[#85888d]"><button aria-label="最小化"><svg class="size-4"><use href="#min"/></svg></button><button aria-label="关闭"><svg class="size-4"><use href="#x"/></svg></button></div>
  </section>

  <!-- device file window -->
  <section class="absolute left-[475px] top-[214px] flex h-[642px] w-[1102px] flex-col overflow-hidden rounded-[10px] border border-[#c9cdd3] bg-[#f0f4f9] shadow-[0_10px_40px_rgba(0,0,0,0.24)]">
    <div class="flex h-11 shrink-0 items-center gap-2 px-4 text-[#75797f]">
      <svg class="size-6 opacity-55"><use href="#app-gear"/></svg><h2 class="flex-1">文件管理</h2>
      <button aria-label="最小化" class="mr-[22px]"><svg class="size-4"><use href="#min"/></svg></button>
      <button aria-label="最大化" class="mr-[22px]"><svg class="size-4"><use href="#max"/></svg></button>
      <button aria-label="关闭"><svg class="size-4"><use href="#x"/></svg></button>
    </div>
    <div class="flex min-h-0 flex-1">
      <aside class="w-[180px] shrink-0 px-2 pt-2 text-[#4b5059]">
        <ul>
          <li><a href="#" class="flex h-[37px] items-center gap-2 rounded-md bg-white pl-2 text-[#1f6fe0]"><svg viewBox="0 0 16 16" class="size-4"><path d="M5.500 3 11 8 5.500 13Z" fill="#0d50b8"/></svg>设备全部文件</a></li>
          <li><a href="#" class="flex h-[37px] items-center gap-2 pl-2"><svg class="size-4"><use href="#share"/></svg>外链分享管理</a></li>
          <li><a href="#" class="flex h-[37px] items-center gap-2 pl-2"><svg class="size-4"><use href="#trash"/></svg>回收站管理</a></li>
        </ul>
      </aside>
      <div class="flex min-w-0 flex-1 flex-col rounded-tl-[10px] bg-white pt-5">
        <div class="flex h-7 px-5 text-[#4a5568]">
          <div class="flex w-[55px] rounded-md border border-[#c9d5e3]"><button aria-label="后退" class="flex flex-1 items-center justify-center border-r border-[#c9d5e3]"><svg class="size-3.5"><use href="#left"/></svg></button><button aria-label="前进" class="flex flex-1 items-center justify-center text-[#a9b7c9]"><svg class="size-3.5"><use href="#right"/></svg></button></div>
          <button aria-label="刷新" class="ml-4 flex w-7 items-center justify-center rounded-md border border-[#c9d5e3]"><svg class="size-4"><use href="#refresh"/></svg></button>
          <nav aria-label="路径" class="ml-3 flex min-w-0 flex-1 items-center gap-0.5 rounded-md border border-[#c9d5e3] pl-[11px] whitespace-nowrap">
            <a href="#">设备全部文件</a><svg class="size-3 shrink-0"><use href="#right"/></svg><a href="#">存储空间1</a><svg class="size-3 shrink-0"><use href="#right"/></svg><a href="#">@snapshot</a><svg class="size-3 shrink-0"><use href="#right"/></svg><a href="#">1000</a><svg class="size-3 shrink-0"><use href="#right"/></svg><a href="#" class="font-medium">GMT+08-2025.08.16-17.22.20</a>
          </nav>
          <label class="ml-3 flex w-[200px] items-center gap-2 rounded-md border border-[#c9d5e3] pl-[9px]"><svg class="size-4 shrink-0 text-[#8ea1bb]"><use href="#mag"/></svg><input type="search" placeholder="搜索" aria-label="搜索" class="w-full bg-transparent outline-none placeholder:text-[#b6c1d2]"></label>
        </div>
        <div class="mt-5 flex h-7 gap-2 px-5 font-medium text-[#434d5f]">
          <button class="flex items-center gap-2 rounded-md border border-[#c9d5e3] px-3"><svg class="size-3.5"><use href="#upload"/></svg>上传</button>
          <button class="flex items-center gap-2 rounded-md border border-[#c9d5e3] px-3"><svg class="size-3.5"><use href="#newfolder"/></svg>新建文件夹</button>
          <button class="flex items-center gap-2 rounded-md border border-[#c9d5e3] px-3"><svg class="size-3.5"><use href="#download"/></svg>下载</button>
          <button class="flex items-center gap-2 rounded-md border border-[#c9d5e3] px-3"><svg class="size-3.5"><use href="#trash"/></svg>删除</button>
          <button class="flex items-center gap-2 rounded-md border border-[#c9d5e3] px-3"><svg class="size-3.5"><use href="#more"/></svg>更多</button>
        </div>
        <div class="mt-[17px] pl-[21px] pr-5">
          <table class="w-full table-fixed border-separate border-spacing-0 text-left whitespace-nowrap">
            <colgroup><col class="w-[476px]"><col></colgroup>
            <thead class="text-[#8497b3] [&_th]:pb-0.5">
              <tr class="h-[38px]">
                <th class="border-t border-[#dfe6f0] p-0 font-normal"><div class="flex items-center pl-2 pr-1"><span class="relative mr-[9px] flex size-4"><input type="checkbox" checked aria-label="全选" class="size-4 appearance-none rounded-[3px] bg-[#1f6fe0]"><svg viewBox="0 0 16 16" class="pointer-events-none absolute inset-0 size-4"><path d="M4 8 7 11 12 5" fill="none" stroke="#fff" stroke-width="2"/></svg></span><span class="flex-1">文件名</span><svg class="h-4 w-2"><use href="#sort"/></svg></div></th>
                <th class="border-t border-[#dfe6f0] p-0 font-normal"><div class="h-4 border-l border-[#dbe2ec] pl-2 leading-4">修改时间</div></th>
              </tr>
            </thead>
            <tbody><tr class="h-[39px] bg-[#d7e5f8]"><td class="p-0"><div class="flex items-center pl-2"><svg class="size-4 text-[#444]"><use href="#right"/></svg><svg class="ml-2 mr-[11px] h-6 w-[26px]"><use href="#folder"/></svg>docker</div></td><td class="p-0 pl-[9px]">2025-08-08 15:21</td></tr></tbody>
          </table>
        </div>
        <div class="mt-auto flex h-[37px] items-center border-t border-[#e3e6ee] pl-4 pt-px text-xs text-[#8497b3]">选中 1 项&nbsp; (共 1 项)</div>
      </div>
    </div>
  </section>

  <!-- details window -->
  <section class="absolute left-[1254px] top-[312px] h-[642px] w-[682px] overflow-hidden rounded-[10px] border border-[#c9cdd3] bg-white shadow-[0_10px_40px_rgba(0,0,0,0.24)]">
    <div class="flex h-11 items-center bg-[#f0f4f9] pl-4 pr-[15px] text-[#1f2329]"><h2 class="flex-1 font-medium">详细信息 - docker</h2><button aria-label="最小化" class="mr-[30px]"><svg class="size-4"><use href="#min"/></svg></button><button aria-label="关闭"><svg class="size-4"><use href="#x"/></svg></button></div>
    <div class="flex h-[72px] items-center gap-3 pl-6"><svg class="h-9 w-10"><use href="#folder"/></svg><span class="font-medium">docker</span></div>
    <div role="tablist" class="flex h-[25px] gap-6 border-b border-[#c9d5e3] pl-5 text-[#8497b3]">
      <button role="tab" aria-selected="true" class="h-[25px] border-b-2 border-[#1f6fe0] px-1 pb-3 leading-[11px] font-bold text-[#1f2329]">常规</button>
      <button role="tab" aria-selected="false" class="h-[25px] px-1 pb-3.5 leading-[11px]">权限</button>
    </div>
    <dl class="grid auto-rows-[34px] grid-cols-[98px_1fr] items-center pl-5 pt-[7px] [&>dt]:text-[#8497b3]">
      <dt>类型</dt><dd>文件夹</dd>
      <dt>大小</dt><dd>949.47 MB（995,595,428 字节）</dd>
      <dt>占用空间</dt><dd>950.71 MB（996,888,576 字节）</dd>
      <dt>所有者</dt><dd>dangyizhang</dd>
      <dt>文件夹包含</dt><dd>644 个文件， 325 个文件夹</dd>
      <dt>位置</dt><dd>存储空间1/@snapshot/1000/GMT+08-2025.08.16-17.22.20 <a href="#" class="text-[#1f6fe0]">复制原始路径</a></dd>
      <dt>修改时间</dt><dd>2025-08-08 15:21</dd>
      <dt>创建时间</dt><dd>2025-07-28 18:56</dd>
    </dl>
  </section>
</main>

<!-- taskbar -->
<footer class="flex h-10 shrink-0 items-center bg-[linear-gradient(90deg,#1b2a30_0px,#1b2a30_430px,#474747_540px)]">
  <button aria-label="开始" class="flex h-full w-12 items-center justify-center"><svg viewBox="0 0 16 16" class="size-4"><path d="M0 2.200 6.700 1.300V7.500H0ZM7.700 1.200 16 0V7.500H7.700ZM0 8.500H6.700V14.700L0 13.800ZM7.700 8.500H16V16L7.700 14.800Z" fill="#fff"/></svg></button>
  <button aria-label="助手" class="ml-[3px] flex h-full w-12 items-center justify-center"><svg viewBox="0 0 24 24" class="size-6"><g fill="#fff"><circle cx="7" cy="7.500" r="5.500"/><circle cx="15" cy="7" r="5.500"/><circle cx="16.500" cy="14.500" r="5.500"/><circle cx="8.500" cy="17" r="5.500"/><circle cx="11" cy="12" r="5"/></g><path d="M11 2Q16 6 11.500 11.500M21 10Q16 16 11.500 11.500M14 22Q7 18 11.500 11.500M1.500 13Q6 8 11.500 11.500" fill="none" stroke="#1b2a30" stroke-width="1.400"/><circle cx="21" cy="3" r="3" fill="#ff4b2e"/></svg></button>
  <button aria-label="资源管理器" class="ml-1.5 flex h-full w-12 items-center justify-center"><svg viewBox="0 0 24 24" class="size-6"><path d="M1 3H9L11 5H22V20H1Z" fill="#e8a33d"/><path d="M1 6H23V20H1Z" fill="#ffd66b"/><path d="M5 13H19V21H15V17H9V21H5Z" fill="#3a9be0"/></svg></button>
  <button aria-label="浏览器" class="ml-px flex h-full w-12 items-center justify-center border-b-2 border-[#76b9ed] bg-[#48555a]"><svg viewBox="0 0 24 24" class="size-6"><circle cx="12" cy="12" r="11" fill="#6cc32f" stroke="#fff" stroke-width="1.500"/><path d="M17.500 15Q15.500 17.500 12.500 17.500 7.500 17.500 7.500 12.500T12.500 7Q17.500 7 17.500 12.500H8" fill="none" stroke="#fff" stroke-width="3"/></svg></button>
  <button aria-label="图库" class="ml-px flex h-full w-12 items-center justify-center"><svg viewBox="0 0 24 24" class="size-6"><path d="M0 0H7Q12 1 12 12H8Q0 11 0 6Z" fill="#1fd97a"/><path d="M24 0H17Q12 1 12 12H16Q24 11 24 6Z" fill="#22b4f7"/><path d="M0 24H7Q12 23 12 12H8Q0 13 0 18Z" fill="#ffb340"/><path d="M24 24H17Q12 23 12 12H16Q24 13 24 18Z" fill="#fb6260"/></svg></button>
  <button aria-label="迅雷" class="ml-px flex h-full w-12 items-center justify-center"><svg viewBox="0 0 24 24" class="size-6"><rect width="24" height="24" rx="3" fill="#3f7df6"/><path d="M2 6Q8 7 11 8L21 2Q20 8 17 11L21 13 17 15Q15 20 8 22L10 17Q5 15 4.500 12L6 12Q3 9 2 6Z" fill="#fff"/></svg></button>
  <button aria-label="文档" class="ml-px flex h-full w-12 items-center justify-center"><svg viewBox="0 0 24 24" class="size-6"><path d="M4 1H16L20 5V22H4Z" fill="#fafafa"/><path d="M16 1V5H20" fill="none" stroke="#999"/></svg></button>
  <button aria-label="记事本" class="ml-[5px] flex h-full w-10 items-center justify-center border-b-2 border-[#76b9ed]"><svg viewBox="0 0 24 24" class="size-6"><path d="M8 2H22L19 21 16 22Z" fill="#d7cdb9"/><path d="M9 2H21L15 22 1 18Z" fill="#5fb0c4"/><path d="M9 2H21L19.500 7 6 8Z" fill="#bfe4ec"/></svg></button>
  <button aria-label="微信" class="ml-[9px] flex h-full w-10 items-center justify-center border-b-2 border-[#76b9ed]"><svg viewBox="0 0 24 24" class="size-6"><rect width="24" height="24" rx="5" fill="#07c160"/><path d="M9.500 5Q16 5 16 10 16 15 9.500 15L6 17V14Q3.500 12.500 3.500 10 3.500 5 9.500 5Z" fill="#fff"/><path d="M15 9.500Q20.500 9.500 20.500 14 20.500 16 19 17V19.500L16 18Q10 18.500 10 14 10 9.500 15 9.500Z" fill="#fff" stroke="#07c160" stroke-width=".8"/><g fill="#07c160"><circle cx="7.500" cy="9" r="1"/><circle cx="12" cy="8.500" r="1"/><circle cx="13.300" cy="13" r=".8"/><circle cx="17" cy="13" r=".8"/></g></svg></button>

  <div class="ml-auto flex h-full items-center text-white">
    <svg viewBox="0 0 16 16" class="mr-2 size-4"><path d="M2 11 8 5 14 11" fill="none" stroke="#fff" stroke-width="1.400"/></svg>
    <svg viewBox="0 0 16 16" class="mr-2 size-4"><circle cx="7.500" cy="7.500" r="7.500" fill="#3aa52e"/><path d="M0 8Q2 1 9 2L10 6 6 10 2 12Z" fill="#ffe100"/><rect x="6" y="8" width="10" height="8" rx="2" fill="#2f8df0"/><path d="M8 14V10H14V14L12.500 12.500H9.500Z" fill="#fff"/></svg>
    <svg viewBox="0 0 16 16" class="mr-2 size-4"><path d="M.5 5.500H3L6.500 2V14L3 10.500H.5ZM8.500 5.500Q10 8 8.500 10.500M10.500 3.500Q13 8 10.500 12.500" fill="none" stroke="#fff" stroke-width="1.100"/><path d="M12.700 2Q16 8 12.700 14" fill="none" stroke="#999"/></svg>
    <svg viewBox="0 0 16 16" class="mr-2 size-4"><path d="M5 3H15.500V11.500H3V7M9 11.500V14.500M5 14.500H13M.5 2.500H4.500V6.500H.5Z" fill="none" stroke="#fff" stroke-width="1.100"/></svg>
    <span class="mr-3.5 w-4 text-center font-medium">中</span>
    <svg viewBox="0 0 16 16" class="mr-4 size-4"><rect width="16" height="16" rx="2" fill="#fff" stroke="#f4511e"/><path d="M3 4.500H14M8 4.500Q7 10 3 12.500M7 8H12L11 13H8.500" fill="none" stroke="#f4511e" stroke-width="1.700"/></svg>
    <time class="w-[60px] text-center text-[13px] leading-[19px]">16:36:11<br>2025/8/18</time>
    <svg viewBox="0 0 16 16" class="ml-[18px] size-4"><path d="M.5 1.500H15.500V12.500H10L8 14.500 6 12.500H.5Z" fill="none" stroke="#fff"/></svg>
    <span class="ml-5 mr-1 h-full w-px bg-[#888]"></span>
  </div>
</footer>
</body>
</html>
